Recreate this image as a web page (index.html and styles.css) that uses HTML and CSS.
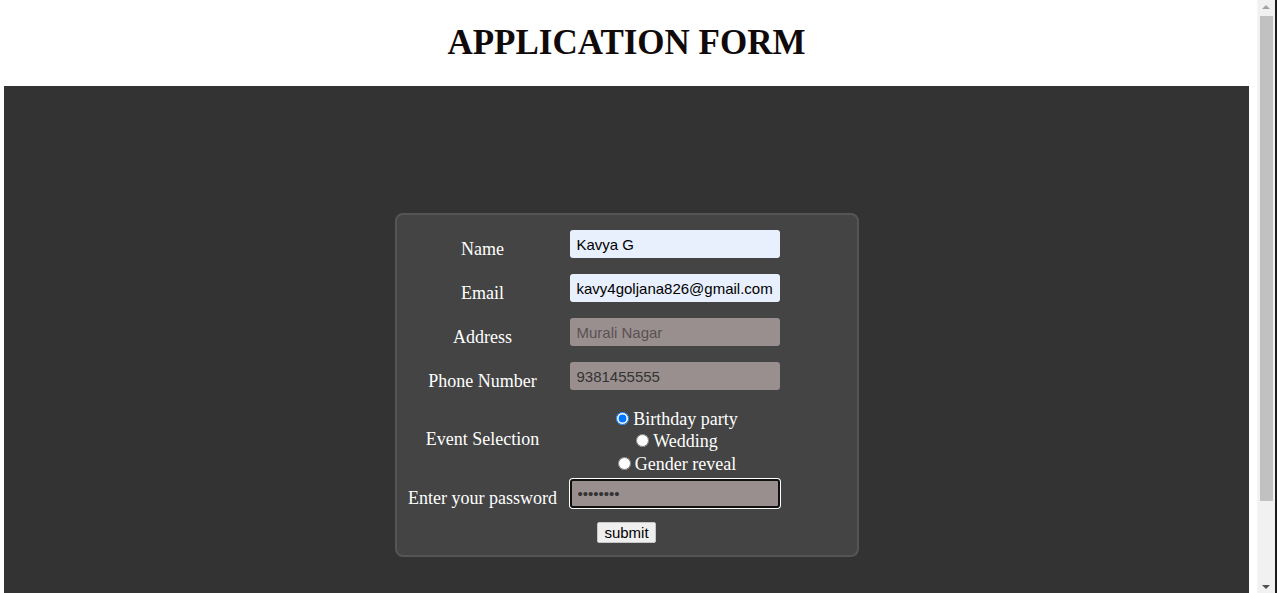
FILE: index.html
```html
<!DOCTYPE html>
<html lang="en">
<head>
<meta charset="utf-8">
<title>Application Form</title>
<link rel="stylesheet" href="styles.css">
</head>
<body>
<div class="page">
  <header class="header">
    <h1 class="title">APPLICATION FORM</h1>
  </header>
  <main class="stage">
    <form class="card" onsubmit="return false">
      <div class="fields">
        <label class="label" for="name">Name</label>
        <div class="cell"><input id="name" class="field autofill" type="text" value="Kavya G"></div>

        <label class="label" for="email">Email</label>
        <div class="cell"><input id="email" class="field autofill" type="email" value="kavy4goljana826@gmail.com"></div>

        <label class="label" for="address">Address</label>
        <div class="cell"><input id="address" class="field muted" type="text" placeholder="Murali Nagar"></div>

        <label class="label" for="phone">Phone Number</label>
        <div class="cell"><input id="phone" class="field muted" type="text" value="9381455555"></div>

        <span class="label">Event Selection</span>
        <div class="radios">
          <input type="radio" name="event" id="e1" checked><label for="e1">Birthday party</label><br>
          <input type="radio" name="event" id="e2"><label for="e2">Wedding</label><br>
          <input type="radio" name="event" id="e3"><label for="e3">Gender reveal</label>
        </div>

        <label class="label" for="pw">Enter your password</label>
        <div class="cell"><input id="pw" class="field muted focused" type="password" value="12345678"></div>
      </div>
      <div class="actions">
        <button class="submit" type="submit">submit</button>
      </div>
    </form>
  </main>
</div>
<div class="scrollbar" aria-hidden="true">
  <div class="sb-arrow sb-up"></div>
  <div class="sb-thumb"></div>
  <div class="sb-arrow sb-down"></div>
</div>
</body>
</html>
```
FILE: styles.css
```css
html {
  overflow: hidden;
}
body {
  margin: 0;
  background: #ffffff;
  font-family: "Liberation Serif", "Times New Roman", serif;
}
.page {
  margin: 0 28px 0 4px;
}
.header {
  height: 86px;
  box-sizing: border-box;
  padding-top: 23px;
  text-align: center;
}
.title {
  margin: 0;
  font-size: 35px;
  font-weight: bold;
  line-height: normal;
  color: #110a0a;
}
.stage {
  background: #333333;
  padding: 127px 0 120px;
}
.card {
  width: 464px;
  box-sizing: border-box;
  margin: 0 auto;
  background: #444444;
  border: 2px solid #555555;
  border-radius: 8px;
  padding: 15px 0 12px 6px;
}
.fields {
  display: grid;
  grid-template-columns: 160px 210px;
  column-gap: 7px;
  row-gap: 6px;
}
.label {
  align-self: center;
  text-align: center;
  color: #ffffff;
  font-size: 18px;
  line-height: normal;
}
.cell {
  padding-bottom: 10px;
}
.field {
  display: block;
  width: 210px;
  height: 28px;
  box-sizing: border-box;
  margin: 0;
  padding: 0 7px;
  border: none;
  border-radius: 3px;
  font-family: "Liberation Sans", Arial, sans-serif;
  font-size: 15px;
  color: #000000;
  outline: none;
}
.autofill {
  background: #e8f0fe;
}
.muted {
  background: #998f8f;
  color: #333333;
}
.muted::placeholder {
  color: #5a5252;
  opacity: 1;
}
.focused {
  height: 29px;
  border: 2px solid #111111;
  padding: 0 6px;
  box-shadow: 0 0 0 1px #ffffff;
}
.radios {
  text-align: center;
  color: #ffffff;
  font-size: 18px;
  line-height: 22.4px;
  padding-top: 2px;
  margin-bottom: -2px;
}
.radios input {
  width: 13px;
  height: 13px;
  margin: 3px 4px 0 5px;
}
.actions {
  display: flex;
  justify-content: center;
  margin: 4px 6px 0 0;
}
.submit {
  font-family: "Liberation Sans", Arial, sans-serif;
  font-size: 15px;
  line-height: normal;
  height: 21px;
  padding: 0 6px;
  background: #efefef;
  color: #000000;
  border: 1px solid #c8c8c8;
  border-radius: 2px;
}
.scrollbar {
  position: fixed;
  top: 0;
  right: 0;
  width: 17px;
  height: 100%;
  background: #f1f1f1;
  border-right: 2px solid #1c1c1c;
  border-left: 1px solid #f6f6f6;
}
.sb-thumb {
  position: absolute;
  left: 2px;
  right: 2px;
  top: 16px;
  bottom: 92px;
  background: #c1c1c1;
}
.sb-arrow {
  position: absolute;
  left: 4px;
  width: 0;
  height: 0;
  border-left: 4px solid transparent;
  border-right: 4px solid transparent;
}
.sb-up {
  top: 5px;
  border-bottom: 4px solid #a3a3a3;
}
.sb-down {
  bottom: 4px;
  border-top: 4px solid #505050;
}
```
